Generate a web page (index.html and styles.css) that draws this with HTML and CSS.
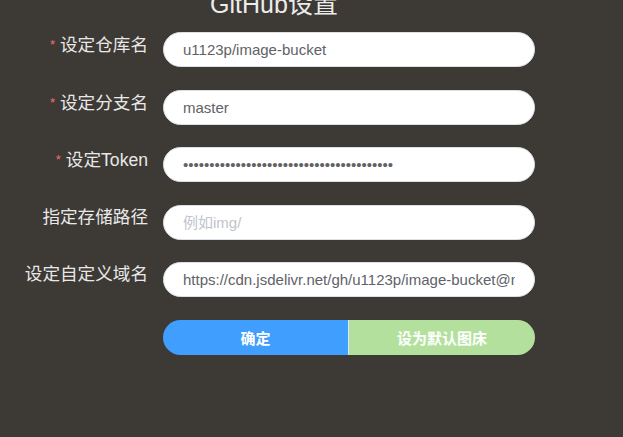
FILE: index.html
```html
<!DOCTYPE html>
<html lang="zh-CN">
<head>
<meta charset="utf-8">
<title>GitHub设置</title>
<link rel="stylesheet" href="styles.css">
</head>
<body>
<div class="page">
  <h1 class="title">GitHub设置</h1>
  <form class="form">
    <label class="label"><span class="req">*</span>设定仓库名</label>
    <div class="field"><input class="input" type="text" value="u1123p/image-bucket"></div>

    <label class="label"><span class="req">*</span>设定分支名</label>
    <div class="field"><input class="input" type="text" value="master"></div>

    <label class="label"><span class="req">*</span>设定Token</label>
    <div class="field"><input class="input" type="password" value="abcdefghijabcdefghijabcdefghijabcdefghij"></div>

    <label class="label">指定存储路径</label>
    <div class="field"><input class="input" type="text" placeholder="例如img/"></div>

    <label class="label">设定自定义域名</label>
    <div class="field"><input class="input" type="text" value="https://cdn.jsdelivr.net/gh/u1123p/image-bucket@master"></div>

    <div class="spacer"></div>
    <div class="buttons">
      <button type="button" class="btn btn-primary">确定</button>
      <button type="button" class="btn btn-success">设为默认图床</button>
    </div>
  </form>
</div>
</body>
</html>
```

FILE: styles.css
```css
html, body {
  margin: 0;
  padding: 0;
  background: #3d3934;
  height: 100%;
  overflow: hidden;
}

body {
  font-family: "Liberation Sans", "Noto Sans CJK SC", sans-serif;
}

.page {
  width: 548px;
}

.title {
  margin: -8px 0 0 0;
  font-size: 25px;
  line-height: 24px;
  font-weight: normal;
  color: #ececec;
  text-align: center;
}

.form {
  margin-top: 16px;
  display: grid;
  grid-template-columns: 148px 372px;
  column-gap: 15px;
  row-gap: 22.6px;
  grid-auto-rows: 35px;
}

.label {
  align-self: start;
  text-align: right;
  font-size: 17.6px;
  line-height: 25px;
  color: #e8e8e8;
  white-space: nowrap;
}

.req {
  color: #f56c6c;
  font-size: 13px;
  margin-right: 5px;
  vertical-align: 2px;
}

.field {
  display: flex;
}

.input {
  box-sizing: border-box;
  width: 100%;
  height: 35px;
  border: 1px solid #dcdfe6;
  border-radius: 18px;
  background: #fff;
  padding: 0 19px;
  font-family: "Liberation Sans", "Noto Sans CJK SC", sans-serif;
  font-size: 15px;
  color: #606266;
  outline: none;
}

.input::placeholder {
  color: #c0c4cc;
}

.buttons {
  display: flex;
  height: 35px;
  border-radius: 18px;
  overflow: hidden;
}

.btn {
  border: none;
  margin: 0;
  padding: 0;
  height: 35px;
  font-family: "Liberation Sans", "Noto Sans CJK SC", sans-serif;
  font-size: 15px;
  font-weight: bold;
  color: #fff;
}

.btn-primary {
  width: 185px;
  background: #409eff;
}

.btn-success {
  flex: 1;
  background: #b3e19d;
  border-left: 1px solid #d6eaf0;
}
```
